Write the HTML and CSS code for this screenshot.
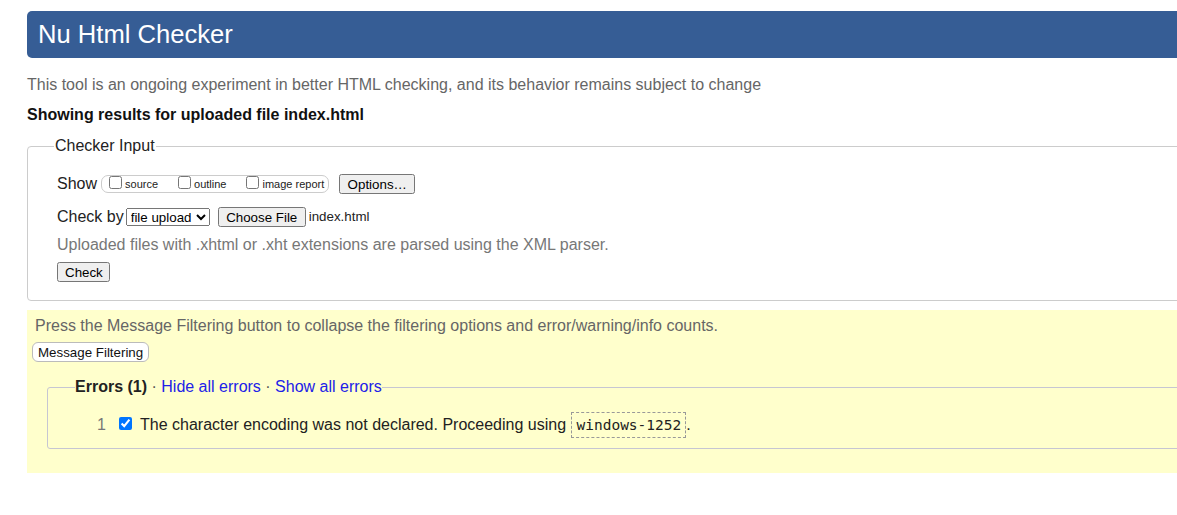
FILE: index.html
```html
<!DOCTYPE html>
<html lang="en">
<head>
<meta charset="utf-8">
<title>Nu Html Checker</title>
<link rel="stylesheet" href="styles.css">
</head>
<body>
<div class="page">
  <header class="banner"><h1 class="title">Nu Html Checker</h1></header>
  <p class="intro">This tool is an ongoing experiment in better HTML checking, and its behavior remains subject to change</p>
  <p class="showing">Showing results for uploaded file index.html</p>

  <fieldset class="input-box">
    <legend class="input-legend">Checker Input</legend>
    <div class="row row-show">
      <span class="lbl">Show</span>
      <span class="opts">
        <label class="opt"><input type="checkbox" class="cb">source</label>
        <label class="opt"><input type="checkbox" class="cb">outline</label>
        <label class="opt opt-last"><input type="checkbox" class="cb">image report</label>
      </span>
      <button class="btn btn-options">Options…</button>
    </div>
    <div class="row row-check">
      <span class="lbl">Check by</span>
      <select class="sel"><option>file upload</option></select>
      <button class="btn btn-file">Choose File</button>
      <span class="fname">index.html</span>
    </div>
    <p class="note">Uploaded files with .xhtml or .xht extensions are parsed using the XML parser.</p>
    <div class="row row-submit"><button class="btn btn-check">Check</button></div>
  </fieldset>

  <section class="results">
    <p class="filter-note">Press the Message Filtering button to collapse the filtering options and error/warning/info counts.</p>
    <button class="filter-btn">Message Filtering</button>
    <fieldset class="errors">
      <legend class="err-legend"><strong>Errors (1)</strong> <span class="dot">·</span> <a class="lnk" href="#">Hide all errors</a> <span class="dot">·</span> <a class="lnk" href="#">Show all errors</a></legend>
      <div class="err-item">
        <span class="num">1</span>
        <input type="checkbox" class="err-cb" checked>
        <span class="msg">The character encoding was not declared. Proceeding using <code class="code">windows-1252</code>.</span>
      </div>
    </fieldset>
  </section>
</div>
</body>
</html>
```

FILE: styles.css
```css
html, body {
  margin: 0;
  padding: 0;
  overflow: hidden;
  background: #fff;
}
body {
  font-family: "Liberation Sans", Arial, sans-serif;
  font-size: 16px;
  color: #222;
}
.page {
  width: 1200px;
  padding: 11px 0 0 27px;
}
.banner {
  background: #365d95;
  border-radius: 5px 0 0 5px;
  height: 47px;
  display: flex;
  align-items: center;
  padding-left: 11px;
}
.title {
  margin: 0;
  color: #fff;
  font-weight: normal;
  font-size: 25.6px;
  line-height: 30px;
  padding-bottom: 1px;
}
.intro {
  margin: 18px 0 0;
  line-height: 18px;
  color: #666;
}
.showing {
  margin: 12px 0 0;
  line-height: 18px;
  font-weight: bold;
  color: #111;
}
.input-box {
  margin: 13px 0 0;
  padding: 0 29px 18px 29px;
  border: 1px solid #ccc;
  border-radius: 4px;
  min-width: 0;
}
.input-legend {
  padding: 0 1px;
  margin-left: -3px;
  line-height: 18px;
  color: #222;
}
.row {
  display: flex;
  align-items: center;
}
.row-show {
  margin-top: 19px;
  height: 20px;
}
.lbl {
  line-height: 18px;
  color: #222;
}
.opts {
  display: inline-flex;
  align-items: center;
  height: 16px;
  margin-left: 4px;
  padding: 0 3px 0 3px;
  border: 1px solid #ccc;
  border-radius: 7px;
  font-size: 11px;
}
.opt {
  display: inline-flex;
  align-items: center;
  margin-right: 16px;
  color: #222;
}
.opt-last {
  margin-right: 1px;
}
.cb {
  width: 13px;
  height: 13px;
  margin: 0 3px 0 4px;
  position: relative;
  top: -2px;
}
.btn {
  font-family: "Liberation Sans", Arial, sans-serif;
  font-size: 13.33px;
  height: 20px;
  padding: 1px 6px;
  color: #000;
}
.btn-options {
  margin-left: 10px;
  width: 76px;
}
.row-check {
  margin-top: 13px;
  height: 19px;
}
.sel {
  font-family: "Liberation Sans", Arial, sans-serif;
  font-size: 13.33px;
  height: 18px;
  width: 84px;
  margin-left: 2px;
  padding: 0;
  color: #000;
}
.btn-file {
  margin-left: 8px;
  width: 88px;
  height: 20px;
}
.fname {
  margin-left: 3px;
  font-size: 13.33px;
  color: #222;
}
.note {
  margin: 10px 0 0;
  line-height: 18px;
  color: #777;
}
.row-submit {
  margin-top: 8px;
}
.btn-check {
  width: 53px;
}
.results {
  margin-top: 9px;
  background: #ffffcc;
  padding: 7px 0 24px 5px;
}
.filter-note {
  margin: 0 0 0 3px;
  line-height: 18px;
  color: #666;
}
.filter-btn {
  margin-top: 7px;
  height: 20px;
  padding: 0 5px;
  background: #fff;
  border: 1px solid #bbb;
  border-radius: 6px;
  font-family: "Liberation Sans", Arial, sans-serif;
  font-size: 13.33px;
  color: #111;
}
.errors {
  margin: 16px 0 0 15px;
  padding: 0 28px 10px 27px;
  border: 1px solid #c6c6d2;
  border-radius: 3px;
  min-width: 0;
}
.err-legend {
  padding: 0;
  line-height: 18px;
  color: #222;
}
.err-legend strong {
  color: #222;
}
.dot {
  color: #555;
}
.lnk {
  color: #2121e8;
  text-decoration: none;
}
.err-item {
  display: flex;
  align-items: center;
  margin-top: 16px;
  height: 26px;
  padding-left: 22px;
}
.num {
  color: #777;
  width: 18px;
}
.err-cb {
  width: 13px;
  height: 13px;
  margin: 0 8px 0 4px;
  position: relative;
  top: -2px;
}
.msg {
  color: #222;
  line-height: 18px;
}
.code {
  display: inline-block;
  font-family: "DejaVu Sans Mono", "Liberation Mono", monospace;
  font-size: 14.5px;
  line-height: 18px;
  padding: 3px 4px 3px 4px;
  border: 1px dashed #999;
  margin-left: 1px;
  color: #222;
}
```
